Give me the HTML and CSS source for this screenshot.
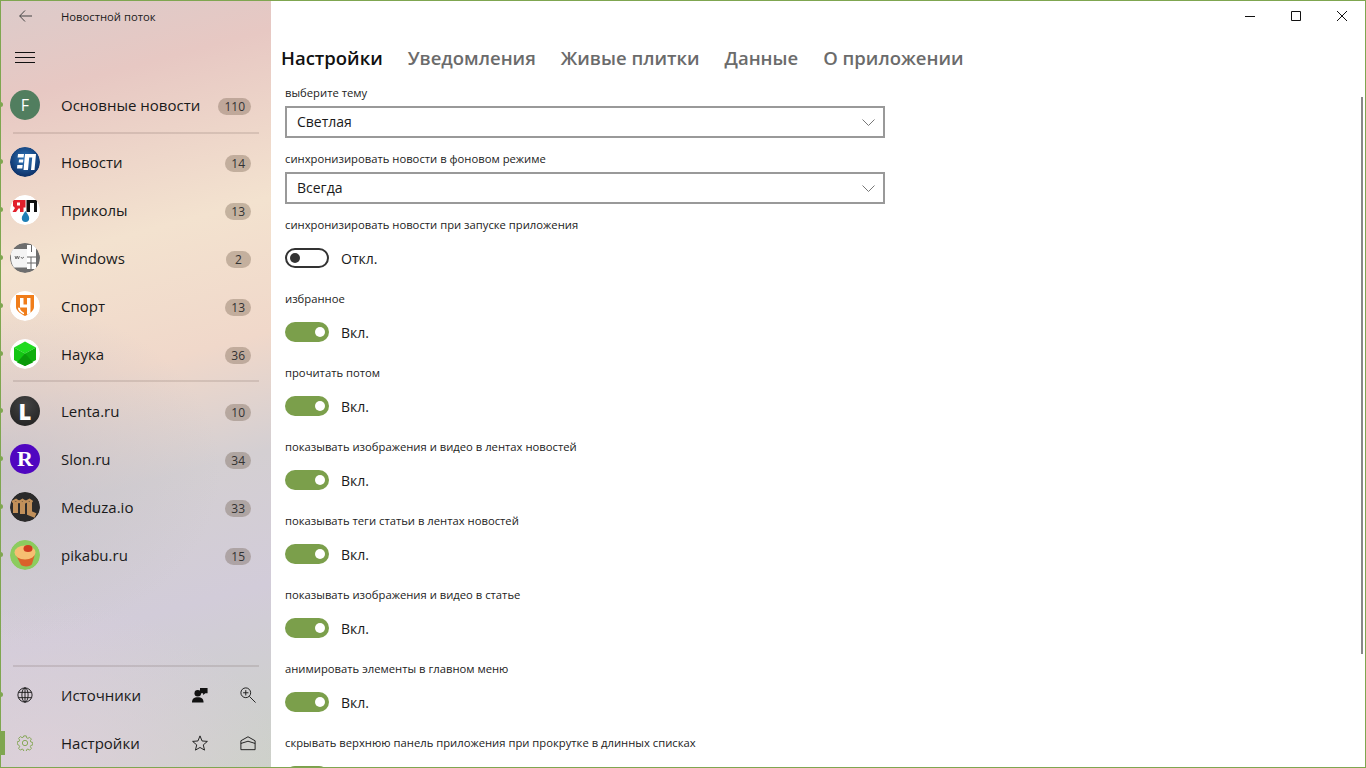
FILE: index.html
```html
<!DOCTYPE html>
<html lang="ru">
<head>
    <meta charset="UTF-8">
    <meta name="viewport" content="width=device-width, initial-scale=1.0">
    <title>Новостной поток</title>
    <link rel="stylesheet" href="styles.css">
</head>
<body>
    <div class="window">

        <aside class="sidebar">
            <div class="titlebar">
                <svg class="back-icon" width="13" height="12" viewBox="0 0 13 12"><path d="M6 .5.700 6 6 11.500M.700 6H13" fill="none" stroke="#444"/></svg>
                <span class="app-title">Новостной поток</span>
            </div>
            <div class="burger"><span></span><span></span><span></span></div>

            <div class="nav-item dotted">
                <div class="avatar av-f">F</div>
                <span class="nav-label">Основные новости</span>
                <span class="count">110</span>
            </div>
            <div class="nav-sep sep-first"></div>

            <div class="nav-item dotted">
                <svg class="avatar" viewBox="0 0 30 30"><defs><radialGradient id="blue" cx="50%" cy="40%" r="60%"><stop offset="0" stop-color="#2f78bd"/><stop offset="1" stop-color="#0c2f66"/></radialGradient></defs><circle cx="15" cy="15" r="15" fill="url(#blue)"/><path d="M8 7h6l-.4 3.500H7.600zM9 12.500h4.400l-.4 3H8.700zM7.300 18h5.400l-.4 3.500H7z" fill="#fff"/><path d="M15 7h11l-1.500 16h-3.500l1.200-12.500h-3L18 23h-4.500z" fill="#fff"/></svg>
                <span class="nav-label">Новости</span>
                <span class="count">14</span>
            </div>
            <div class="nav-item dotted">
                <svg class="avatar" viewBox="0 0 30 30"><circle cx="15" cy="15" r="15" fill="#fff"/><path d="M3 5h12.500v7.500h-2V17h-3.500v-3.500H8.500L6 17H2.500l2.500-4-2-2z" fill="#e2202c"/><path d="M7 7.500h3v3H7z" fill="#fff"/><path d="M16.500 5H27v12h-3V8h-4v9h-3.500z" fill="#111"/><path d="M15.500 16c2 3 3.700 5 3.700 7.300a3.700 3.700 0 0 1-7.400 0c0-2.300 1.700-4.300 3.700-7.300z" fill="#1f7fb5"/></svg>
                <span class="nav-label">Приколы</span>
                <span class="count">13</span>
            </div>
            <div class="nav-item dotted">
                <svg class="avatar" viewBox="0 0 30 30"><circle cx="15" cy="15" r="15" fill="#6e6e6e"/><path d="M1 6h16v18.500H4C2 22 1 18 1 15z" fill="#f4f4f4"/><path d="M17 2h9v24h-9z" fill="#fff"/><path d="M17 14h9M21 14v12M17 20h9M21.500 2v7" stroke="#666" fill="none"/><path d="M5 13l1 3 1.200-3 1.200 3 1-3M11 14l1 1.500 2-1.500" stroke="#555" fill="none" stroke-width=".8"/></svg>
                <span class="nav-label">Windows</span>
                <span class="count">2</span>
            </div>
            <div class="nav-item dotted">
                <svg class="avatar" viewBox="0 0 30 30"><circle cx="15" cy="15" r="15" fill="#fff"/><path d="M6 4h18v12c0 4-5 7-9 9-4-2-9-5-9-9z" fill="#f07d1a"/><path d="M10 7h3.500v6.500H17V7h3.500v15l-3.500 1.700V16.500h-7z" fill="#fff"/><path d="M8 17v-.5l2 .5c0 2 2 3.500 4 4.700v1.500C11 22 8 20 8 17z" fill="#fff"/></svg>
                <span class="nav-label">Спорт</span>
                <span class="count">13</span>
            </div>
            <div class="nav-item dotted">
                <svg class="avatar" viewBox="0 0 30 30"><circle cx="15" cy="15" r="15" fill="#fff"/><path d="M15 2.500 26 8.500 15 14.500 4 8.500z" fill="#1fdb1f"/><path d="M4 8.500l11 6V27L4 21z" fill="#13c613"/><path d="M26 8.500 15 14.500V27l11-6z" fill="#0fae0f"/><path d="M15 14.500 7 23.500l8 3.500 8-3.500z" fill="#0a9a0a"/></svg>
                <span class="nav-label">Наука</span>
                <span class="count">36</span>
            </div>
            <div class="nav-sep sep-second"></div>

            <div class="nav-item dotted">
                <div class="avatar av-lenta">L</div>
                <span class="nav-label">Lenta.ru</span>
                <span class="count">10</span>
            </div>
            <div class="nav-item dotted">
                <div class="avatar av-slon">R</div>
                <span class="nav-label">Slon.ru</span>
                <span class="count">34</span>
            </div>
            <div class="nav-item dotted">
                <svg class="avatar" viewBox="0 0 30 30"><circle cx="15" cy="15" r="15" fill="#2b2b2b"/><path d="M5.500 10v11M12.500 10v12M19.500 10v11l6 2.500" fill="none" stroke="#c1905a" stroke-width="5"/><path d="M2 10l4-2 3 2 3.500-2 3 2 4-2 3 2" fill="none" stroke="#c1905a" stroke-width="2.500"/></svg>
                <span class="nav-label">Meduza.io</span>
                <span class="count">33</span>
            </div>
            <div class="nav-item dotted">
                <svg class="avatar" viewBox="0 0 30 30"><circle cx="15" cy="15" r="15" fill="#8ccc5e"/><path d="M6 15l19-1-3 10c-1 3-9 3-11 1z" fill="#d9622a"/><ellipse cx="15" cy="12.500" rx="10.500" ry="7" fill="#f6bf72"/><ellipse cx="18" cy="8.500" rx="4.500" ry="3.500" fill="#cf3d1f"/></svg>
                <span class="nav-label">pikabu.ru</span>
                <span class="count">15</span>
            </div>

            <div class="sidebar-bottom">
                <div class="nav-sep"></div>
                <div class="nav-item dotted">
                    <svg class="tool-globe" width="16" height="16" viewBox="0 0 18 18" fill="none" stroke="#111"><circle cx="9" cy="9" r="8"/><ellipse cx="9" cy="9" rx="3.500" ry="8"/><path d="M1.500 6h15M1.500 12h15M9 1v16"/></svg>
                    <span class="nav-label">Источники</span>
                    <div class="tools">
                        <svg width="16" height="16" viewBox="0 0 18 18"><path d="M9 1h8.500v6h-2.500l-2.500 2V7H9z" fill="#111"/><circle cx="6.500" cy="7" r="3.700" fill="#111"/><path d="M0 17.500c0-4 2-6 6.500-6s6.500 2 6.500 6z" fill="#111"/></svg>
                        <svg width="16" height="16" viewBox="0 0 18 18" fill="none" stroke="#111"><circle cx="6.500" cy="6.500" r="5.500"/><path d="M10.500 10.500 17.500 17.500M6.500 3.500v6M3.500 6.500h6"/></svg>
                    </div>
                </div>
                <div class="nav-item current">
                    <svg class="tool-gear" width="16" height="16" viewBox="0 0 18 18" fill="none" stroke="#7ea44c"><circle cx="9" cy="9" r="3"/><path d="M7.600 1h2.800l.5 2.200 1.400.6 1.900-1.200 2 2-1.200 1.900.6 1.400 2.100.5v2.800l-2.100.5-.6 1.400 1.200 1.900-2 2-1.900-1.200-1.400.6-.5 2.100H7.600l-.5-2.100-1.400-.6-1.900 1.200-2-2 1.200-1.900-.6-1.400L.3 10.400V7.600l2.100-.5.6-1.400-1.200-1.900 2-2 1.900 1.200 1.400-.6z"/></svg>
                    <span class="nav-label">Настройки</span>
                    <div class="tools">
                        <svg width="16" height="16" viewBox="0 0 18 18" fill="none" stroke="#111"><path d="M9 1l2.300 5.700 6 .5-4.600 3.900 1.400 5.900L9 14l-5.100 3 1.400-5.900L.7 7.200l6-.5z"/></svg>
                        <svg width="16" height="16" viewBox="0 0 18 18" fill="none" stroke="#111"><path d="M1 6.500 9 2l8 4.500v10H1zM1 9.500 9 7l8 2.500"/></svg>
                    </div>
                </div>
            </div>
        </aside>

        <main class="content">
            <div class="caption-buttons">
                <svg width="10" height="10" viewBox="0 0 10 10"><path d="M0 5.500h10" stroke="#111"/></svg>
                <svg width="10" height="10" viewBox="0 0 10 10"><path d="M.5.500h9v9h-9z" fill="none" stroke="#111"/></svg>
                <svg width="10" height="10" viewBox="0 0 10 10"><path d="M0 0l10 10M10 0 0 10" stroke="#111"/></svg>
            </div>
            <nav class="tabs">
                <span class="tab active">Настройки</span>
                <span class="tab">Уведомления</span>
                <span class="tab">Живые плитки</span>
                <span class="tab">Данные</span>
                <span class="tab">О приложении</span>
            </nav>

            <div class="settings">
                <div class="field">
                    <div class="field-label">выберите тему</div>
                    <div class="select">
                        <span class="select-value">Светлая</span>
                        <svg width="13" height="7" viewBox="0 0 13 7"><path d="M.5.500 6.500 6.500l6-6" fill="none" stroke="#777"/></svg>
                    </div>
                </div>
                <div class="field">
                    <div class="field-label">синхронизировать новости в фоновом режиме</div>
                    <div class="select">
                        <span class="select-value">Всегда</span>
                        <svg width="13" height="7" viewBox="0 0 13 7"><path d="M.5.500 6.500 6.500l6-6" fill="none" stroke="#777"/></svg>
                    </div>
                </div>
                <div class="toggle-field">
                    <div class="field-label">синхронизировать новости при запуске приложения</div>
                    <div class="toggle-row"><div class="toggle off"><span class="knob"></span></div><span>Откл.</span></div>
                </div>
                <div class="toggle-field">
                    <div class="field-label">избранное</div>
                    <div class="toggle-row"><div class="toggle"><span class="knob"></span></div><span>Вкл.</span></div>
                </div>
                <div class="toggle-field">
                    <div class="field-label">прочитать потом</div>
                    <div class="toggle-row"><div class="toggle"><span class="knob"></span></div><span>Вкл.</span></div>
                </div>
                <div class="toggle-field">
                    <div class="field-label">показывать изображения и видео в лентах новостей</div>
                    <div class="toggle-row"><div class="toggle"><span class="knob"></span></div><span>Вкл.</span></div>
                </div>
                <div class="toggle-field">
                    <div class="field-label">показывать теги статьи в лентах новостей</div>
                    <div class="toggle-row"><div class="toggle"><span class="knob"></span></div><span>Вкл.</span></div>
                </div>
                <div class="toggle-field">
                    <div class="field-label">показывать изображения и видео в статье</div>
                    <div class="toggle-row"><div class="toggle"><span class="knob"></span></div><span>Вкл.</span></div>
                </div>
                <div class="toggle-field">
                    <div class="field-label">анимировать элементы в главном меню</div>
                    <div class="toggle-row"><div class="toggle"><span class="knob"></span></div><span>Вкл.</span></div>
                </div>
                <div class="toggle-field">
                    <div class="field-label">скрывать верхнюю панель приложения при прокрутке в длинных списках</div>
                    <div class="toggle-row"><div class="toggle"></div></div>
                </div>
            </div>
            <div class="scrollbar"></div>
        </main>
    </div>
</body>
</html>
```

FILE: styles.css
```css
html, body {
    margin: 0;
    padding: 0;
    height: 100%;
    overflow: hidden;
    background-color: white;
    font-family: "Open Sans", "Noto Sans", sans-serif;
    color: #1a1a1a;
}

.window {
    display: flex;
    height: 768px;
    box-sizing: border-box;
    border: 1px solid #7fa650;
    border-left-width: 0;
    overflow: hidden;
}

/* sidebar */
.sidebar {
    position: relative;
    display: flex;
    flex-direction: column;
    flex: 0 0 271px;
    border-left: 1px solid #7fa650;
    box-sizing: border-box;
    background:
        radial-gradient(ellipse 220px 170px at 0 470px, rgba(198, 194, 202, 0.75), transparent),
        radial-gradient(ellipse 240px 170px at 40px 770px, rgba(224, 208, 220, 0.8), transparent),
        linear-gradient(165deg, #dccbca 0%, #e7c8c3 12%, #f3e2cf 32%, #f0d8ca 48%, #d4cfd2 62%, #d2ccd9 78%, #cdd1c9 100%);
}

.titlebar {
    display: flex;
    align-items: center;
    height: 32px;
    padding-bottom: 2px;
    box-sizing: border-box;
}

.back-icon {
    margin-left: 18px;
}

.app-title {
    margin-left: 29px;
    font-size: 11.25px;
}

.burger {
    display: flex;
    flex-direction: column;
    justify-content: center;
    gap: 4px;
    height: 48px;
    padding-left: 14px;
}

.burger span {
    display: block;
    width: 20px;
    height: 1px;
    background-color: #111;
}

.nav-item {
    position: relative;
    display: flex;
    align-items: center;
    height: 48px;
    flex: none;
}

.nav-item.dotted::before {
    content: "";
    position: absolute;
    left: -1px;
    top: 21px;
    width: 3px;
    height: 5px;
    border-radius: 0 3px 3px 0;
    background-color: #7fa650;
}

.nav-item.current::before {
    content: "";
    position: absolute;
    left: 0;
    top: 12px;
    width: 4px;
    height: 24px;
    background-color: #7fa650;
}

.avatar {
    flex: none;
    width: 30px;
    height: 30px;
    margin-left: 9px;
    border-radius: 50%;
    display: flex;
    align-items: center;
    justify-content: center;
    color: white;
}

.av-f {
    background-color: #517e5f;
    font-size: 16px;
}

.av-lenta {
    background: radial-gradient(circle at 50% 30%, #444, #1e1e1e);
    font-size: 22px;
    font-weight: 800;
}

.av-slon {
    background-color: #5007c0;
    font-family: "Liberation Serif", serif;
    font-size: 22px;
    font-weight: bold;
}

.nav-label {
    margin-left: 21px;
    font-size: 15px;
    flex: 1;
}

.count {
    margin-top: 2px;
    margin-right: 20px;
    padding: 0 6px;
    min-width: 13px;
    height: 17px;
    line-height: 17px;
    border-radius: 9px;
    font-size: 12px;
    text-align: center;
    color: #333;
    background-color: rgba(90, 70, 50, 0.3);
}

.nav-sep {
    flex: none;
    height: 2px;
    margin-left: 12px;
    margin-right: 12px;
    background-color: rgba(90, 70, 60, 0.15);
}

.sep-first {
    margin-top: 3px;
    margin-bottom: 4px;
}

.sep-second {
    margin-top: 2px;
    margin-bottom: 5px;
}

.sidebar-bottom {
    margin-top: auto;
}

.sidebar-bottom .nav-sep {
    margin-bottom: 4px;
}

.tool-globe, .tool-gear {
    flex: none;
    margin-left: 16px;
}

.tool-globe + .nav-label, .tool-gear + .nav-label {
    margin-left: 28px;
}

.tools {
    display: flex;
    gap: 32px;
    margin-right: 15px;
}

/* main part */
.content {
    position: relative;
    flex: 1;
    min-width: 0;
    background-color: white;
}

.caption-buttons {
    position: absolute;
    top: 10px;
    right: 18px;
    display: flex;
    gap: 36px;
}

.tabs {
    display: flex;
    gap: 25px;
    padding: 44px 0 0 10px;
    height: 40px;
}

.tab {
    font-size: 18.5px;
    font-weight: 600;
    color: #6b6b6b;
}

.tab.active {
    color: #111;
}

.settings {
    padding-left: 14px;
}

.field-label {
    font-size: 11.25px;
    line-height: 16px;
    color: #222;
}

.field {
    width: 600px;
    margin-bottom: 13px;
}

.select {
    display: flex;
    align-items: center;
    justify-content: space-between;
    box-sizing: border-box;
    height: 32px;
    margin-top: 5px;
    padding: 0 8px 0 10px;
    border: 2px solid #999;
    font-size: 14px;
}

.select-value {
    margin-bottom: 2px;
}

.toggle-field {
    height: 74px;
}

.toggle-row {
    display: flex;
    align-items: center;
    gap: 12px;
    height: 20px;
    margin-top: 15px;
    font-size: 14px;
}

.toggle {
    display: flex;
    align-items: center;
    justify-content: flex-end;
    box-sizing: border-box;
    width: 44px;
    height: 20px;
    padding: 0 4px;
    border-radius: 10px;
    background-color: #7b9f4b;
}

.knob {
    width: 10px;
    height: 10px;
    border-radius: 50%;
    background-color: white;
}

.toggle.off {
    justify-content: flex-start;
    border: 2px solid #333;
    background-color: white;
    padding: 0 3px;
}

.toggle.off .knob {
    background-color: #333;
}

.scrollbar {
    position: absolute;
    top: 96px;
    right: 2px;
    width: 2px;
    height: 557px;
    background-color: #888;
}
```
